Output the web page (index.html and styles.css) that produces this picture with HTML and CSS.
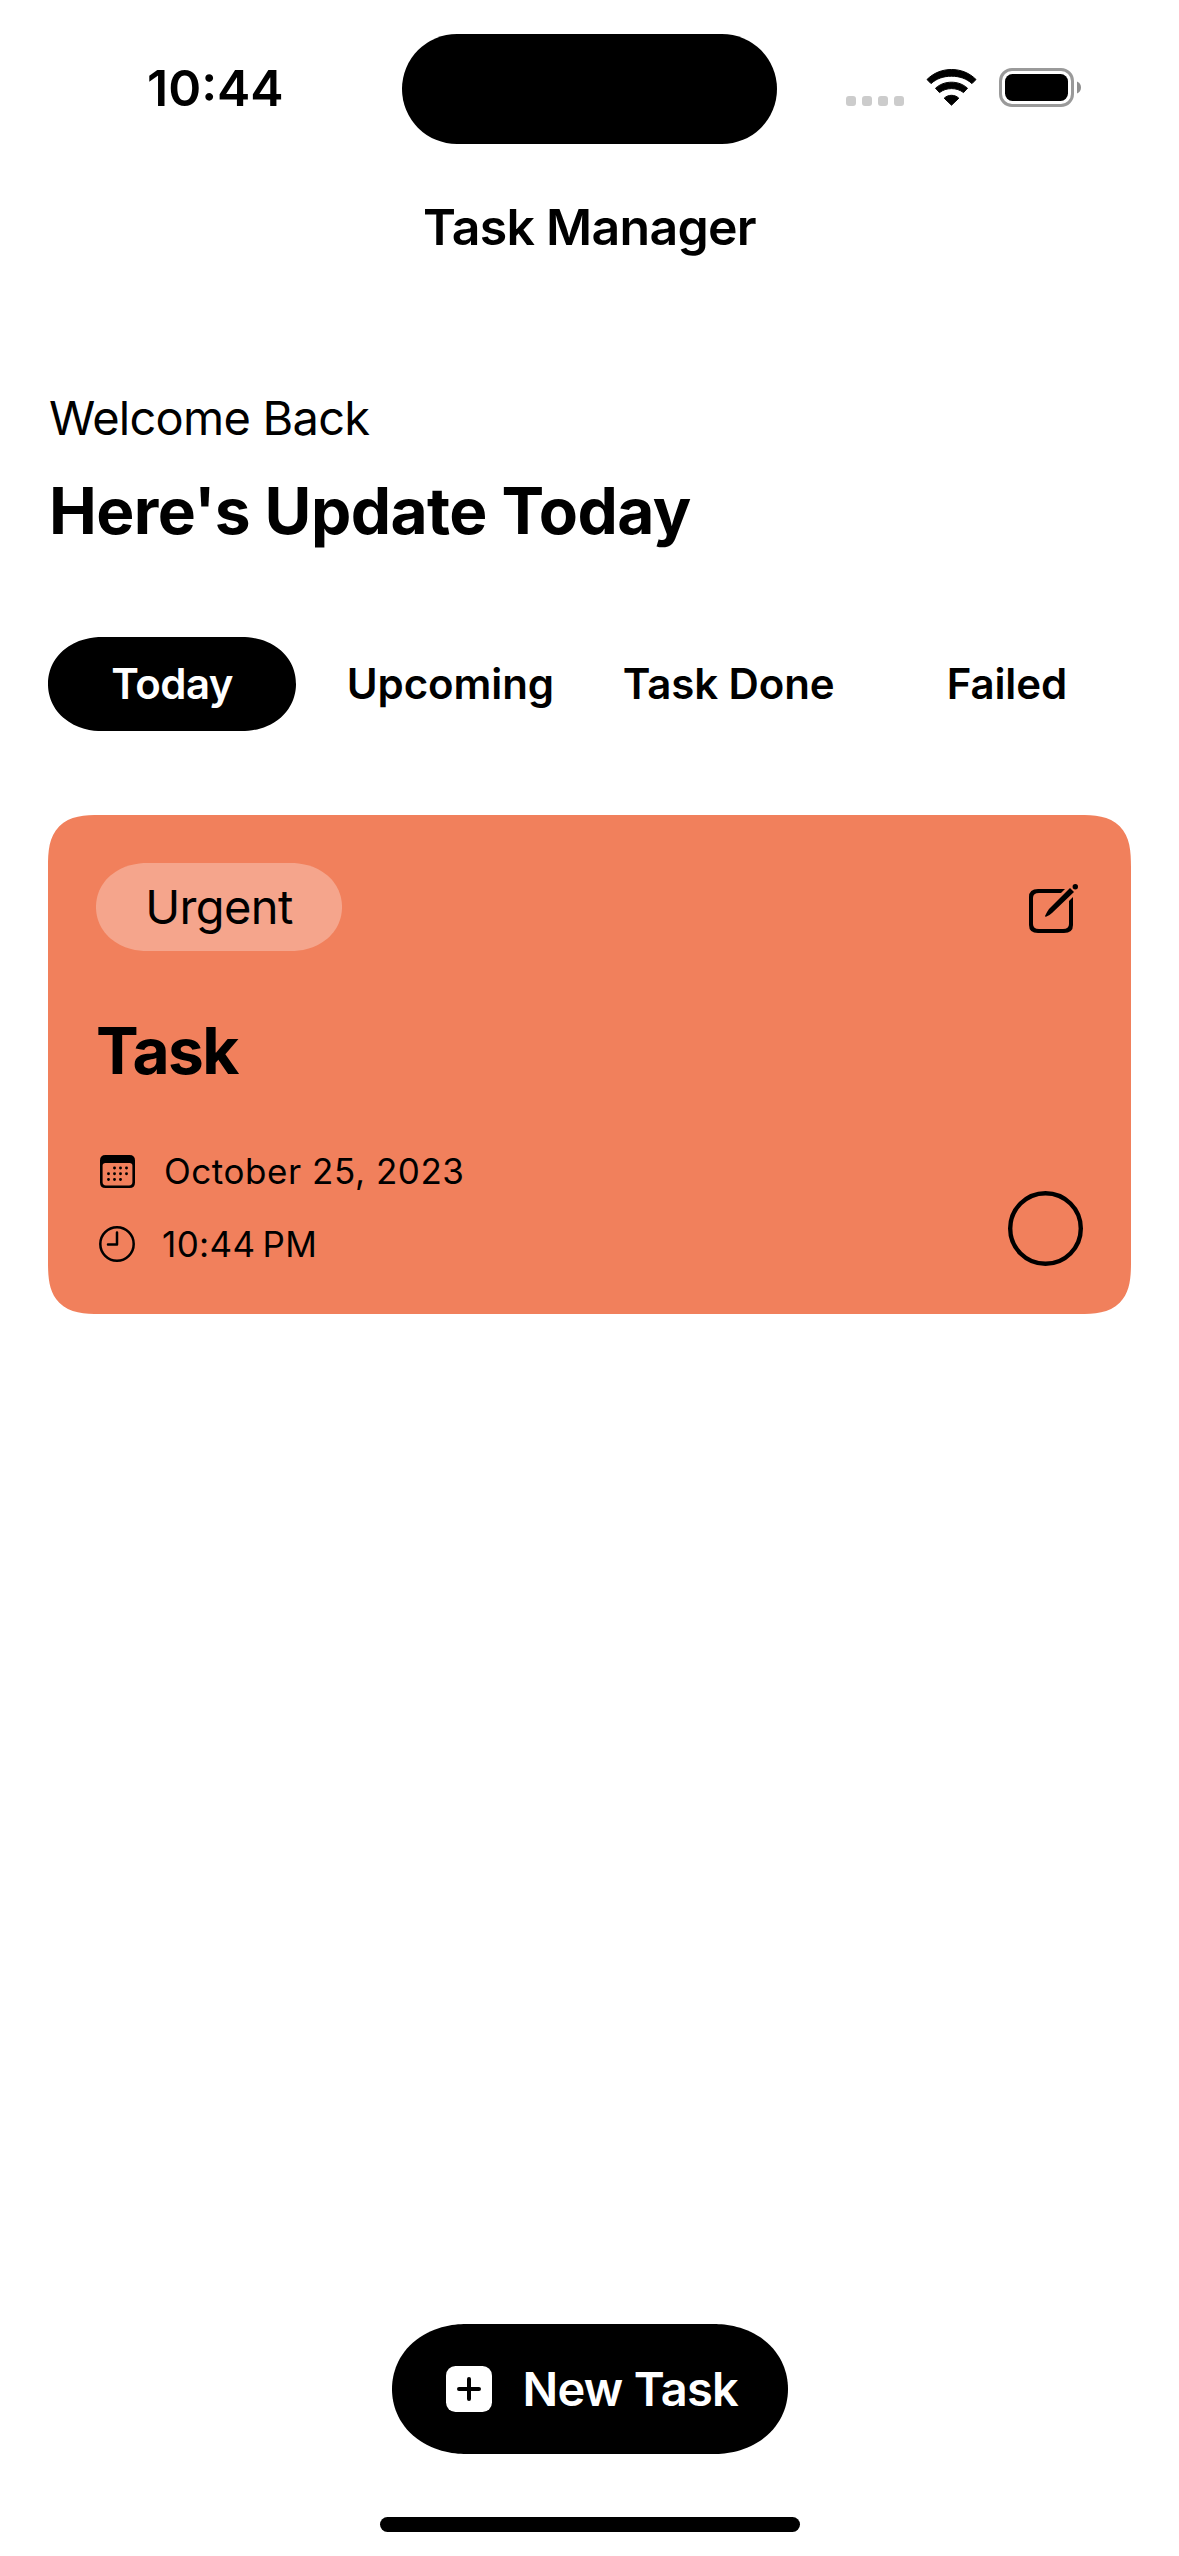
FILE: index.html
```html
<!DOCTYPE html>
<html lang="en">
<head>
<meta charset="utf-8">
<title>Task Manager</title>
<link rel="stylesheet" href="styles.css">
</head>
<body>
<div class="screen">
  <header class="status">
    <div class="status-left"><span class="time">10:44</span></div>
    <div class="island"></div>
    <div class="status-right">
      <svg class="signal" viewBox="0 0 58 10" fill="#ccc"><rect width="10" height="10" rx="3"/><rect x="16" width="10" height="10" rx="3"/><rect x="32" width="10" height="10" rx="3"/><rect x="48" width="10" height="10" rx="3"/></svg>
      <svg class="wifi" viewBox="0 0 51 37" stroke="#000" stroke-width="1" stroke-linejoin="round"><path d="M1 10.500C7.500 4 16 .5 25.500 .5S43.500 4 50 10.500L46 14.600C40.500 9.600 33.500 7.200 25.500 7.200S10.500 9.600 5 14.600Z"/><path d="M9.500 19.200C14 15.200 19.500 13.200 25.500 13.200S37 15.200 41.500 19.200L37.500 23.600C34 20.900 30 19.600 25.500 19.600S17 20.900 13.500 23.600Z"/><path d="M18.200 29.200C20.200 27.300 22.600 26.300 25.500 26.300S30.800 27.300 32.800 29.200L25.500 36.200Z"/></svg>
      <svg class="battery" viewBox="0 0 82 39"><rect x="1.500" y="1.500" width="72" height="36" rx="11.500" fill="none" stroke="#9a9a9a" stroke-width="3"/><rect x="6" y="6" width="63" height="27" rx="7.500"/><path d="M78 13.500c2.500 1 4 3.300 4 6s-1.500 5-4 6z" fill="#8f8f8f"/></svg>
    </div>
  </header>
  <h1 class="title">Task Manager</h1>
  <section class="intro">
    <p class="welcome">Welcome Back</p>
    <h2 class="headline">Here's Update Today</h2>
  </section>
  <nav class="tabs">
    <a class="tab active">Today</a>
    <a class="tab">Upcoming</a>
    <a class="tab">Task Done</a>
    <a class="tab">Failed</a>
  </nav>
  <article class="card">
    <div class="card-top">
      <span class="tag">Urgent</span>
      <svg class="edit" viewBox="0 0 49 49"><path d="M36 5 32 9H10Q4 9 4 14V40Q4 45 10 45H34Q40 45 40 40V17L44 13V41Q44 49 35 49H9Q0 49 0 41V13Q0 5 9 5Z"/><path d="M41 4 45 8 23 29Q21 31 17 32.800Q16 33 16 32Q17.800 28 20 25Z"/><circle cx="46.300" cy="2.700" r="2.700"/></svg>
    </div>
    <h3 class="task">Task</h3>
    <div class="card-bottom">
      <div class="meta">
        <div class="row"><svg class="cal" viewBox="0 0 35 33"><path d="M5.500 0H29.500Q35 0 35 5.500V27.500Q35 33 29.500 33H5.500Q0 33 0 27.500V5.500Q0 0 5.500 0ZM5.500 8Q2.600 8 2.600 10.500V27Q2.600 30.400 6 30.400H29Q32.400 30.400 32.400 27V10.500Q32.400 8 29.500 8Z" fill-rule="evenodd"/><path d="M14.500 13h.01M20.500 13h.01M26.500 13h.01M8.500 18.700h.01M14.500 18.700h.01M20.500 18.700h.01M26.500 18.700h.01M8.500 24.500h.01M14.500 24.500h.01M20.500 24.500h.01" stroke="#000" stroke-width="2.900" stroke-linecap="round"/></svg><span class="date">October 25, 2023</span></div>
        <div class="row"><svg class="clock" viewBox="0 0 36 36" fill="none" stroke="#000" stroke-width="2.500" stroke-linecap="round" stroke-linejoin="round"><circle cx="18" cy="18" r="16.700"/><path d="M18 6.500V18.500H9"/></svg><span class="hour">10:44&#8239;PM</span></div>
      </div>
      <svg class="check" viewBox="0 0 75 75"><circle cx="37.500" cy="37.500" r="35.300" fill="none" stroke="#000" stroke-width="4.400"/></svg>
    </div>
  </article>
  <button class="new"><svg class="plus" viewBox="0 0 46 46"><rect width="46" height="46" rx="9.500" fill="#fff"/><path d="M23 13V33M13 23H33" stroke="#000" stroke-width="4" stroke-linecap="round"/></svg><span>New Task</span></button>
  <div class="home"></div>
</div>
</body>
</html>
```
FILE: styles.css
```css
* { box-sizing: border-box; margin: 0; padding: 0; }
body { background: #fff; color: #000; font-family: Inter, "Liberation Sans", sans-serif; }
.screen { width: 1179px; height: 2556px; display: flex; flex-direction: column; overflow: hidden; }
svg { display: block; flex: none; }

.status { display: grid; grid-template-columns: 402px 375px 402px; height: 144px; padding-top: 34px; flex: none; }
.status-left { padding: 24px 0 0 147px; }
.time { font-size: 50px; line-height: 60px; font-weight: 570; }
.island { background: #000; border-radius: 55px; }
.status-right { display: flex; padding: 34px 0 0 69px; }
.signal { width: 58px; height: 10px; margin-top: 28px; }
.wifi { width: 51px; height: 37px; margin: 1px 0 0 22px; }
.battery { width: 82px; height: 39px; margin-left: 22px; }

.title { margin-top: 53px; text-align: center; font-size: 50px; line-height: 60px; font-weight: 580; letter-spacing: -0.7px; }
.intro { margin: 131px 48px 0; }
.welcome { padding-left: 1px; font-size: 47px; line-height: 60px; letter-spacing: -0.75px; }
.headline { margin-top: 23px; padding-left: 1px; font-size: 64px; line-height: 80px; font-weight: 700; letter-spacing: -0.55px; }

.tabs { display: grid; grid-template-columns: repeat(4, 1fr); gap: 30px; margin: 86px 48px 0; }
.tab { display: flex; align-items: center; justify-content: center; height: 94px; padding-bottom: 2px; font-size: 42px; font-weight: 580; letter-spacing: -0.1px; white-space: nowrap; }
.active { background: #000; color: #fff; border-radius: 54px / 47px; corner-shape: superellipse(1.05); letter-spacing: -0.5px; }

.card { display: flex; flex-direction: column; margin: 84px 48px 0; height: 499px; padding: 48px; background: #f1805c; border-radius: 52px; corner-shape: superellipse(1.5); }
.card-top { display: flex; justify-content: space-between; }
.tag { display: flex; align-items: center; justify-content: center; width: 246px; height: 88px; padding-bottom: 2px; border-radius: 51px / 44px; corner-shape: superellipse(1.05); background: #f5a58c; font-size: 47px; letter-spacing: -0.6px; }
.edit { width: 49px; height: 49px; margin: 21px 5px 0 0; }
.task { margin-top: 60px; font-size: 64px; line-height: 80px; font-weight: 700; letter-spacing: -1.6px; }
.card-bottom { display: flex; justify-content: space-between; align-items: flex-end; margin-top: auto; }
.meta { display: flex; flex-direction: column; gap: 29px; }
.row { display: flex; align-items: center; height: 44px; font-size: 35px; letter-spacing: 0.55px; white-space: nowrap; }
.cal { width: 35px; height: 33px; margin: 0 29px 0 4px; }
.clock { width: 36px; height: 36px; margin: 0 27px 0 3px; }
.hour { letter-spacing: 0.4px; }
.check { width: 75px; height: 75px; }

.new { display: flex; align-items: center; align-self: center; margin-top: auto; width: 396px; height: 130px; padding-left: 54px; gap: 31px; border: 0; border-radius: 74px / 65px; corner-shape: superellipse(1.05); background: #000; color: #fff; font: 580 47px/60px Inter, "Liberation Sans", sans-serif; letter-spacing: -0.7px; white-space: nowrap; }
.plus { width: 46px; height: 46px; }
.home { align-self: center; width: 420px; height: 15px; margin: 63px 0 24px; border-radius: 8px; background: #000; flex: none; }
```
